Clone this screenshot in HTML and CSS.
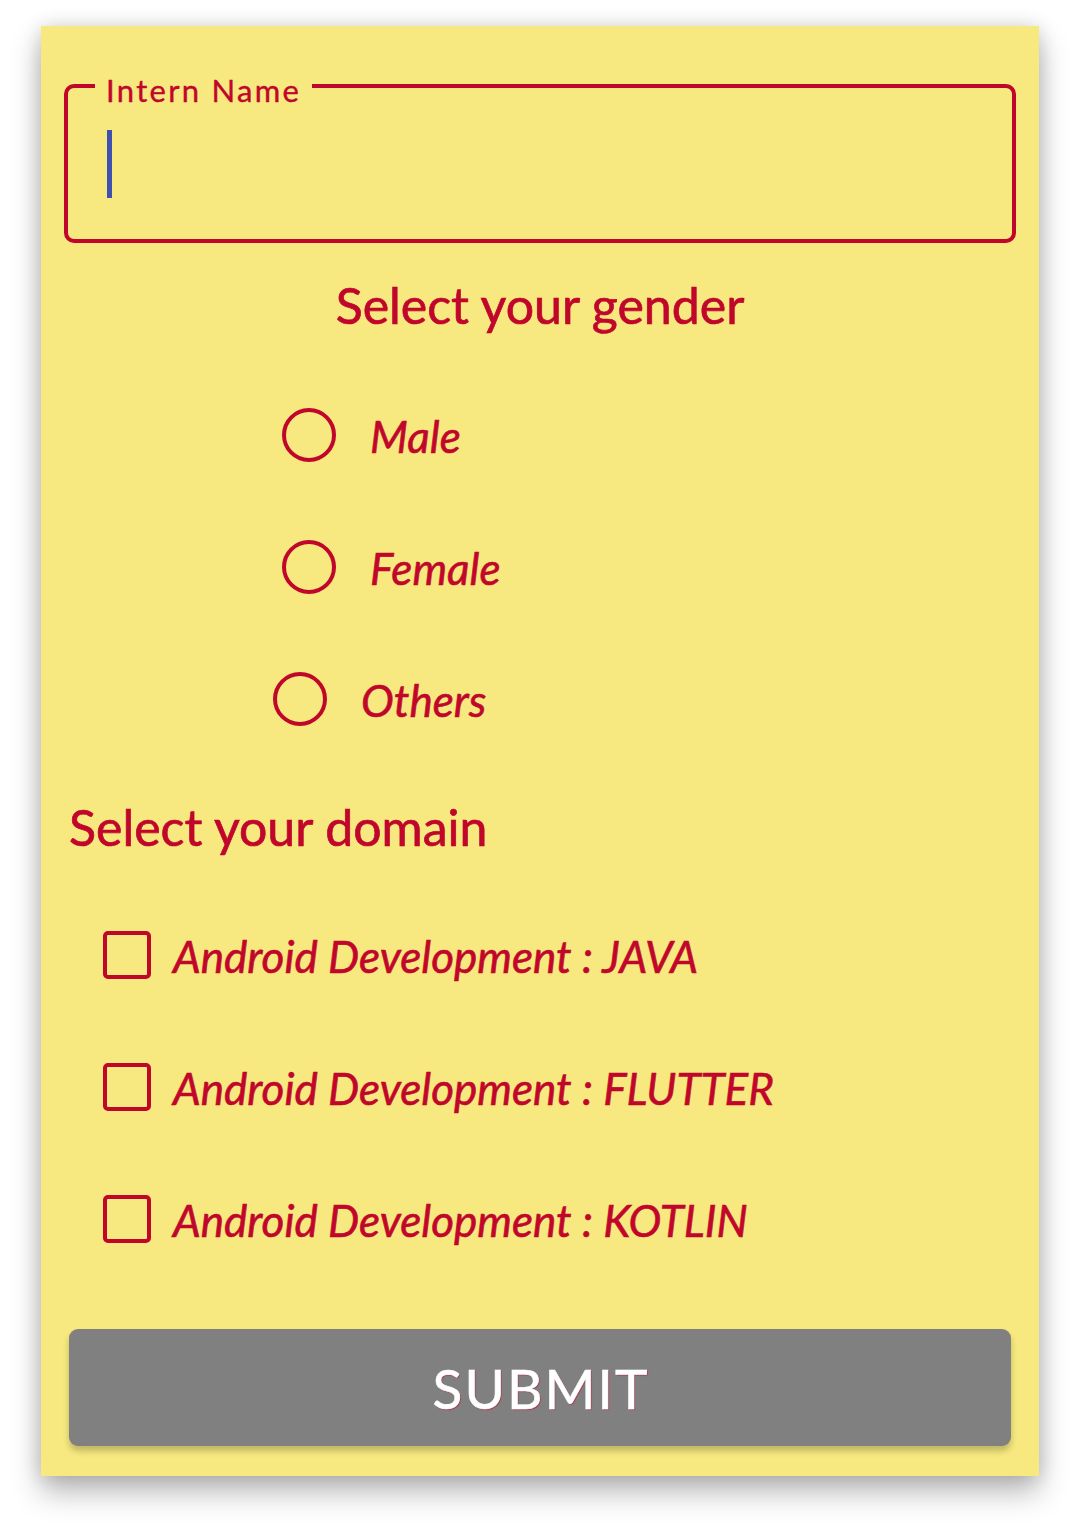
FILE: index.html
```html
<!DOCTYPE html>
<html lang="en">
<head>
<meta charset="utf-8">
<title>Intern Form</title>
<link rel="stylesheet" href="styles.css">
</head>
<body>
<div class="card">
  <div class="field">
    <span class="field-label">Intern Name</span>
    <span class="cursor"></span>
  </div>

  <h2 class="heading heading-center">Select your gender</h2>
  <div class="radio-list">
    <div class="radio-row"><span class="radio"></span><span class="opt">Male</span></div>
    <div class="radio-row"><span class="radio"></span><span class="opt">Female</span></div>
    <div class="radio-row radio-row-shift"><span class="radio"></span><span class="opt">Others</span></div>
  </div>

  <h2 class="heading heading-left">Select your domain</h2>
  <div class="check-list">
    <div class="check-row"><span class="check"></span><span class="opt">Android Development : JAVA</span></div>
    <div class="check-row"><span class="check"></span><span class="opt">Android Development : FLUTTER</span></div>
    <div class="check-row"><span class="check"></span><span class="opt">Android Development : KOTLIN</span></div>
  </div>

  <div class="button">SUBMIT</div>
</div>
</body>
</html>
```

FILE: styles.css
```css
* { box-sizing: border-box; }
html, body { margin: 0; padding: 0; background: #ffffff; }
body {
  font-family: "Lato", "Open Sans", sans-serif;
  width: 1080px;
  height: 1532px;
  overflow: hidden;
}
.card {
  margin: 26px 0 0 41px;
  width: 998px;
  height: 1450px;
  background: #f7e97f;
  box-shadow: 0 16px 28px rgba(0,0,0,0.28), 0 0 18px rgba(0,0,0,0.14);
  display: flex;
  flex-direction: column;
  overflow: hidden;
}
.field {
  position: relative;
  margin: 58px 0 0 23px;
  width: 952px;
  height: 159px;
  border: 4px solid #c1062b;
  border-radius: 10px;
  flex: none;
}
.field-label {
  position: absolute;
  top: -16px;
  left: 27px;
  padding: 0 11px;
  background: #f7e97f;
  color: #c1062b;
  font-size: 31px;
  line-height: 36px;
  letter-spacing: 2.3px;
  -webkit-text-stroke: 0.4px #c1062b;
}
.cursor {
  display: block;
  margin: 42px 0 0 39px;
  width: 5px;
  height: 68px;
  background: #4050b0;
}
.heading {
  margin: 32px 0 0 0;
  font-weight: 400;
  font-size: 50px;
  line-height: 60px;
  color: #c1062b;
  -webkit-text-stroke: 0.7px #c1062b;
  flex: none;
}
.heading-center { text-align: center; }
.heading-left { padding-left: 28px; }
.radio-list {
  margin-top: 34px;
  padding-left: 241px;
  display: flex;
  flex-direction: column;
}
.radio-row {
  height: 132px;
  display: flex;
  align-items: center;
  gap: 34px;
}
.radio-row-shift { margin-left: -9px; }
.radio {
  width: 54px;
  height: 54px;
  border: 4.5px solid #c1062b;
  border-radius: 50%;
  flex: none;
}
.opt {
  font-style: italic;
  font-size: 44px;
  line-height: 50px;
  color: #c1062b;
  -webkit-text-stroke: 0.6px #c1062b;
  padding-top: 2px;
}
.check-list {
  margin-top: 32px;
  padding-left: 62px;
  display: flex;
  flex-direction: column;
}
.check-row {
  height: 132px;
  display: flex;
  align-items: center;
  gap: 22px;
}
.check {
  width: 48px;
  height: 48px;
  border: 4.5px solid #c1062b;
  border-radius: 5px;
  flex: none;
}
.button {
  margin: 44px 0 0 28px;
  width: 942px;
  height: 117px;
  border-radius: 9px;
  background: #808080;
  box-shadow: 0 5px 6px rgba(0,0,0,0.22);
  display: flex;
  align-items: center;
  justify-content: center;
  color: #ffffff;
  font-size: 55px;
  letter-spacing: 2px;
  text-indent: 2px;
  -webkit-text-stroke: 0.6px #ffffff;
  text-shadow: 1px 1px 1px rgba(193,6,43,0.6);
  flex: none;
}
```
